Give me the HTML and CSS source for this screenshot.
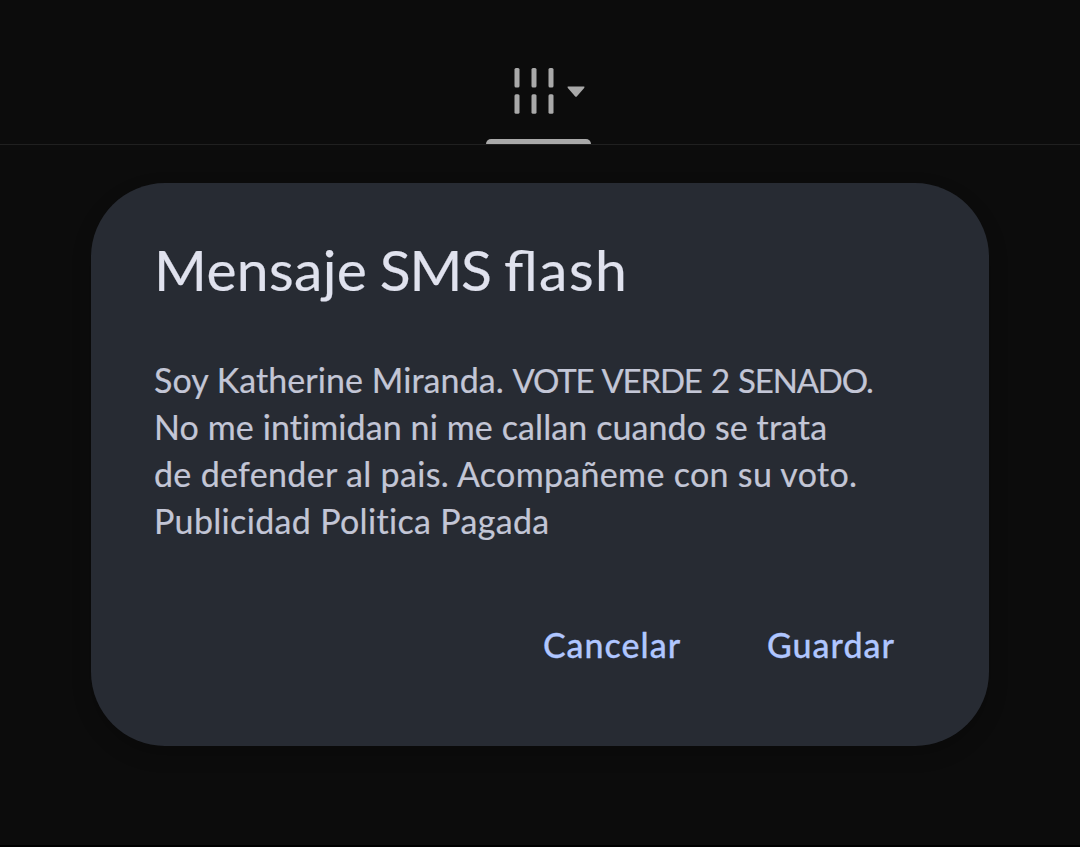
FILE: index.html
```html
<!DOCTYPE html>
<html lang="es">
<head>
    <meta charset="UTF-8">
    <meta name="viewport" content="width=device-width, initial-scale=1.0">
    <title>Mensaje SMS flash</title>
    <link rel="stylesheet" href="styles.css">
</head>
<body>
    <header class="tab-bar">
        <div class="tab">
            <svg class="tab-icon" width="72" height="48" viewBox="0 0 72 48">
                <g fill="#a9a9a9">
                    <rect x="1.5" y="1" width="5" height="19.5" rx="1.5"/>
                    <rect x="18.5" y="1" width="5" height="19.5" rx="1.5"/>
                    <rect x="35.5" y="1" width="5" height="19.5" rx="1.5"/>
                    <rect x="1.5" y="27.3" width="5" height="19.5" rx="1.5"/>
                    <rect x="18.5" y="27.3" width="5" height="19.5" rx="1.5"/>
                    <rect x="35.5" y="27.3" width="5" height="19.5" rx="1.5"/>
                    <path d="M55.3 19.5H70.7Q72.2 19.5 71.2 20.9L64 29.3Q63 30.4 62 29.3L54.8 20.9Q53.8 19.5 55.3 19.5Z"/>
                </g>
            </svg>
            <div class="tab-indicator"></div>
        </div>
    </header>
    <main class="dialog">
        <h1 class="dialog-title"><span class="title-start">Mensaje</span> <span class="title-caps">SMS </span><span class="title-end">flash</span></h1>
        <p class="dialog-message">
            <span class="line line-1">Soy Katherine Miranda. <span class="caps">VOTE VERDE 2 SENADO.</span></span>
            <span class="line line-2">No me intimidan ni me callan cuando se trata</span>
            <span class="line line-3">de defender al pais. Acompañeme con su voto.</span>
            <span class="line line-4">Publicidad Politica Pagada</span>
        </p>
        <div class="dialog-actions">
            <button class="btn btn-cancel">Cancelar</button>
            <button class="btn btn-save">Guardar</button>
        </div>
    </main>
</body>
</html>
```
FILE: styles.css
```css
* {
    box-sizing: border-box;
}

body {
    margin: 0;
    height: 847px;
    overflow: hidden;
    background-color: #0c0c0c;
    border-bottom: 2px solid #000;
    font-family: Lato, sans-serif;
}

.tab-bar {
    display: flex;
    justify-content: center;
    height: 145px;
    padding-right: 3px;
    border-bottom: 1px solid #202020;
}

.tab {
    display: flex;
    flex-direction: column;
    justify-content: space-between;
    width: 105px;
    padding-top: 67px;
}

.tab-icon {
    display: block;
    margin-left: 27px;
    overflow: visible;
}

.tab-indicator {
    height: 5px;
    background-color: #a9a9a9;
    border-radius: 5px 5px 0 0;
}

.dialog {
    width: 898px;
    height: 563px;
    margin: 38px auto 0;
    padding: 51px 63px 0;
    background-color: #272b33;
    border-radius: 74px;
    box-shadow: 0 8px 20px rgba(0, 0, 0, 0.2);
}

.dialog-title {
    margin: 0;
    font-size: 57px;
    font-weight: 400;
    line-height: 70px;
    word-spacing: -2px;
    white-space: nowrap;
    -webkit-text-stroke: 0.2px #e0e2ee;
    color: #e0e2ee;
}

.title-start {
    letter-spacing: 0.35px;
}

.title-caps {
    letter-spacing: -1.3px;
    word-spacing: 0;
}

.title-end {
    letter-spacing: 1.5px;
    font-feature-settings: "liga" 1;
}

.dialog-message {
    margin: 52px 0 0;
    font-size: 34px;
    line-height: 47px;
    font-variant-ligatures: none;
    -webkit-text-stroke: 0.2px #c3c6d6;
    color: #c3c6d6;
}

.line {
    display: block;
    width: max-content;
    height: 47px;
    white-space: nowrap;
}

.line-1 {
    letter-spacing: 0.07px;
}

.caps {
    font-size: 33px;
    line-height: 1;
    letter-spacing: -1.2px;
    word-spacing: 2px;
}

.line-2 {
    letter-spacing: 0.1px;
}

.line-3 {
    letter-spacing: 0.32px;
}

.line-4 {
    letter-spacing: 0.33px;
}

.dialog-actions {
    display: flex;
    justify-content: flex-end;
    gap: 86px;
    margin-top: 77px;
    padding-right: 31px;
}

.btn {
    padding: 0;
    border: none;
    background: none;
    font-family: inherit;
    font-size: 34px;
    font-weight: 500;
    line-height: 48px;
    letter-spacing: 1px;
    -webkit-text-stroke: 0.3px #b0c6ff;
    color: #b0c6ff;
    cursor: pointer;
}
```
